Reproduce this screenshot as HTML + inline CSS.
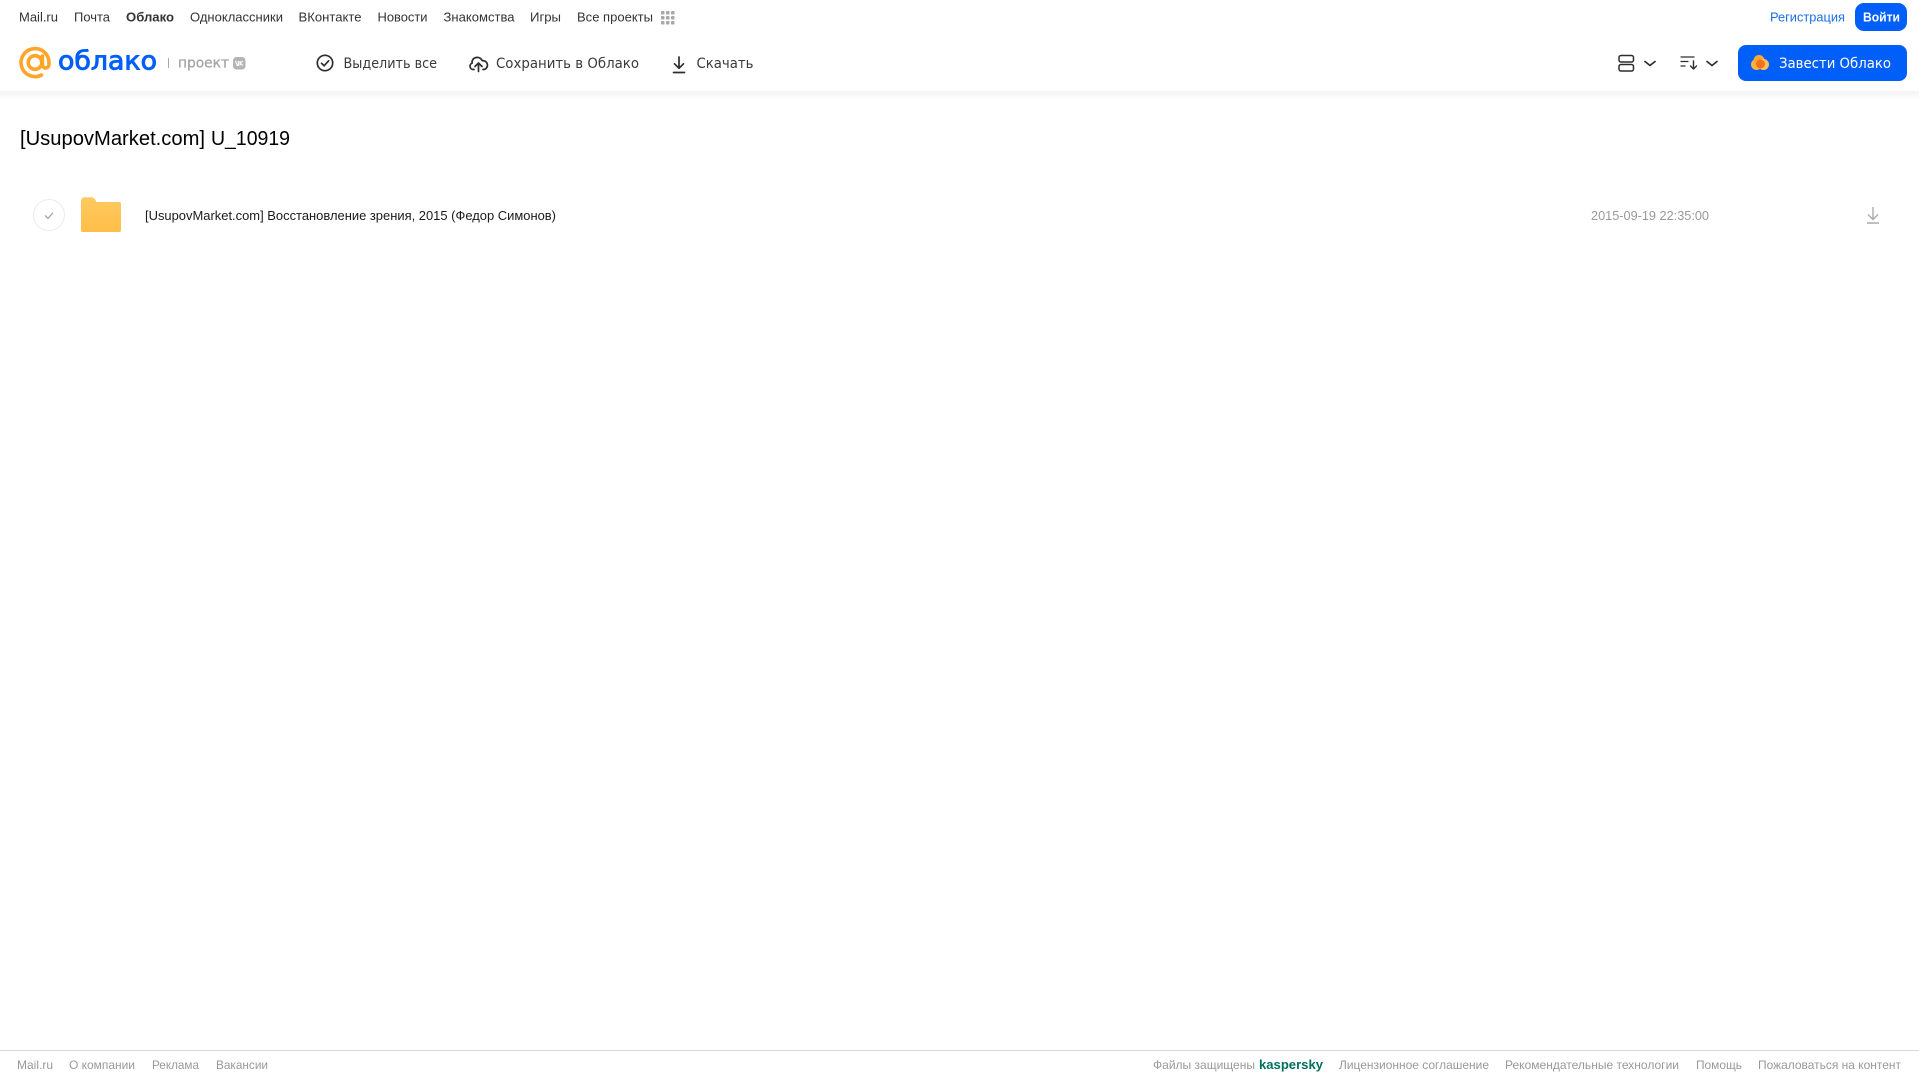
<!DOCTYPE html>
<html lang="ru">
<head>
<meta charset="utf-8">
<title>Облако</title>
<style>
html,body{margin:0;padding:0;width:1919px;height:1079px;overflow:hidden;background:#fff}
svg{display:block;position:absolute;left:0;top:0}
text{font-family:"Liberation Sans",sans-serif;white-space:pre}
.n{font-size:13px;fill:#333}
.t{font-family:"DejaVu Sans",sans-serif;font-size:14px;fill:#3a3a3a}
.f{font-size:12px;fill:#999}
</style>
</head>
<body>
<svg width="1919" height="1079" viewBox="0 0 1919 1079" xmlns="http://www.w3.org/2000/svg">
<defs>
<linearGradient id="sh" x1="0" y1="0" x2="0" y2="1"><stop offset="0" stop-color="#f2f2f2"/><stop offset="1" stop-color="#fff"/></linearGradient>
<linearGradient id="fo" x1="0" y1="0" x2="0" y2="1"><stop offset="0" stop-color="#ffca60"/><stop offset="1" stop-color="#ffbe48"/></linearGradient>
</defs>
<rect x="0" y="91" width="1919" height="9" fill="url(#sh)"/>

<!-- top nav -->
<text class="n" x="19" y="21.5" textLength="39" lengthAdjust="spacingAndGlyphs">Mail.ru</text>
<text class="n" x="74" y="21.5" textLength="36" lengthAdjust="spacingAndGlyphs">Почта</text>
<text class="n" x="126" y="21.5" textLength="48" lengthAdjust="spacingAndGlyphs" font-weight="700">Облако</text>
<text class="n" x="190" y="21.5" textLength="93" lengthAdjust="spacingAndGlyphs">Одноклассники</text>
<text class="n" x="298.500" y="21.5" textLength="63" lengthAdjust="spacingAndGlyphs">ВКонтакте</text>
<text class="n" x="377.500" y="21.5" textLength="50" lengthAdjust="spacingAndGlyphs">Новости</text>
<text class="n" x="443.500" y="21.5" textLength="71" lengthAdjust="spacingAndGlyphs">Знакомства</text>
<text class="n" x="530" y="21.5" textLength="31" lengthAdjust="spacingAndGlyphs">Игры</text>
<text class="n" x="577" y="21.5" textLength="76" lengthAdjust="spacingAndGlyphs">Все проекты</text>
<g fill="#a8a8a8">
<rect x="661" y="11" width="3.500" height="3.500" rx=".8"/><rect x="666" y="11" width="3.500" height="3.500" rx=".8"/><rect x="671" y="11" width="3.500" height="3.500" rx=".8"/>
<rect x="661" y="16" width="3.500" height="3.500" rx=".8"/><rect x="666" y="16" width="3.500" height="3.500" rx=".8"/><rect x="671" y="16" width="3.500" height="3.500" rx=".8"/>
<rect x="661" y="21" width="3.500" height="3.500" rx=".8"/><rect x="666" y="21" width="3.500" height="3.500" rx=".8"/><rect x="671" y="21" width="3.500" height="3.500" rx=".8"/>
</g>
<text class="n" x="1770" y="21.5" textLength="75" lengthAdjust="spacingAndGlyphs" style="fill:#1a6fe8">Регистрация</text>
<rect x="1855" y="3" width="52" height="28" rx="9" fill="#005ff9"/>
<text class="n" x="1863" y="21.5" textLength="37" lengthAdjust="spacingAndGlyphs" font-weight="700" style="fill:#fff">Войти</text>

<!-- logo -->
<g fill="none" stroke="#ffa52a" stroke-width="3.600" stroke-linecap="round">
<circle cx="35" cy="62.500" r="6.800"/>
<path d="M41.500 75A14 14 0 1 1 49 62.500v1.500c0 2.500-1.600 4-3.400 4s-3.200-1.500-3.200-4V56"/>
</g>
<text x="58" y="69.500" textLength="99" lengthAdjust="spacingAndGlyphs" font-size="26" style="font-family:'DejaVu Sans',sans-serif" fill="#005ff9" stroke="#005ff9" stroke-width=".9">облако</text>
<rect x="168" y="58" width="1" height="10" fill="#aaa"/>
<text x="178" y="67.500" textLength="51" lengthAdjust="spacingAndGlyphs" font-size="14" style="font-family:'DejaVu Sans',sans-serif" fill="#a5a5a5" stroke="#a5a5a5" stroke-width=".3">проект</text>
<rect x="233" y="57" width="12.500" height="12.500" rx="3.500" fill="#b4b4b4"/>
<path d="M235.500 61l1.800 4.500h1v-4.500M242.800 61l-2.600 2.200 2.800 2.300M240 61v4.500" fill="none" stroke="#fff" stroke-width="1.100"/>

<!-- toolbar -->
<g fill="none" stroke="#2c2d2e" stroke-width="1.700" stroke-linecap="round" stroke-linejoin="round">
<circle cx="325" cy="63" r="7.700"/>
<path d="M321.500 63.300l2.600 2.500 4.500-5"/>
<path d="M474 69.500h-.8a3.300 3.300 0 0 1-1-6.400 4.600 4.600 0 0 1 4-5.600c2.800-.5 5 .9 6 3.200a4.500 4.500 0 0 1 2.200 8.700l-1.400.1"/>
<path d="M478.500 71.500v-8M475 66.500l3.500-3.500 3.500 3.500"/>
<path d="M679 57v11M674.500 63.800l4.500 4.500 4.500-4.500M673.500 72.500h11"/>
</g>
<text class="t" x="343.500" y="68" textLength="93.500" lengthAdjust="spacingAndGlyphs">Выделить все</text>
<text class="t" x="496" y="68" textLength="143" lengthAdjust="spacingAndGlyphs">Сохранить в Облако</text>
<text class="t" x="696.500" y="68" textLength="57" lengthAdjust="spacingAndGlyphs">Скачать</text>

<!-- right tools -->
<g fill="none" stroke="#2c2d2e" stroke-width="1.500" stroke-linecap="round" stroke-linejoin="round">
<rect x="1619" y="55.500" width="14.500" height="6.500" rx="2"/>
<rect x="1619" y="64.500" width="14.500" height="6.500" rx="2"/>
<path d="M1645 61.500l5 4 5-4" stroke-width="1.700"/>
<path d="M1707 61.500l5 4 5-4" stroke-width="1.700"/>
<path d="M1681 57h13M1681 61.500h7M1681 66h4" stroke-width="1.200"/>
<path d="M1693.500 61v7.500M1690.500 66l3 3 3-3" stroke-width="1.400"/>
</g>
<rect x="1738" y="45" width="169" height="36" rx="8" fill="#005ff9"/>
<g>
<circle cx="1756.500" cy="64.500" r="5.500" fill="#ffb23c"/>
<circle cx="1759" cy="60.500" r="5.500" fill="#ffa930"/>
<circle cx="1763.500" cy="64.500" r="5.500" fill="#ffc05a"/>
<circle cx="1760.500" cy="64" r="4.500" fill="#f5701f"/>
</g>
<text class="t" x="1779" y="68" textLength="112" lengthAdjust="spacingAndGlyphs" style="fill:#fff">Завести Облако</text>

<!-- title -->
<text x="20" y="145" textLength="185" lengthAdjust="spacingAndGlyphs" font-size="20" fill="#000">[UsupovMarket.com]</text>
<text x="211" y="145" textLength="79" lengthAdjust="spacingAndGlyphs" font-size="20" fill="#000">U_10919</text>

<!-- row -->
<circle cx="49" cy="215" r="15.500" fill="#fff" stroke="#ececec" stroke-width="1"/>
<path d="M45 215.500l3 2.800 5-5.500" fill="none" stroke="#a5a5a5" stroke-width="1.300"/>
<path d="M81 201c0-2.200 1.400-3.800 3.500-3.800h7c2 0 3 1 3.800 2.500l1.200 2.300h22.500c1.200 0 2 .8 2 2v26c0 1.200-.8 2-2 2H83c-1.200 0-2-.8-2-2z" fill="url(#fo)"/>
<text x="145" y="220" textLength="411" lengthAdjust="spacingAndGlyphs" font-size="13" fill="#1a1a1a">[UsupovMarket.com] Восстановление зрения, 2015 (Федор Симонов)</text>
<text x="1591" y="220" textLength="118" lengthAdjust="spacingAndGlyphs" font-size="13" fill="#999">2015-09-19 22:35:00</text>
<path d="M1873 207v12M1868 214.500l5 5 5-5M1867 223h12" fill="none" stroke="#aaa" stroke-width="1.400"/>

<!-- footer -->
<rect x="0" y="1050" width="1919" height="1" fill="#d9d9d9"/>
<text class="f" x="17" y="1069" textLength="36" lengthAdjust="spacingAndGlyphs">Mail.ru</text>
<text class="f" x="69" y="1069" textLength="66" lengthAdjust="spacingAndGlyphs">О компании</text>
<text class="f" x="152" y="1069" textLength="47" lengthAdjust="spacingAndGlyphs">Реклама</text>
<text class="f" x="216" y="1069" textLength="52" lengthAdjust="spacingAndGlyphs">Вакансии</text>
<text class="f" x="1153" y="1069" textLength="102" lengthAdjust="spacingAndGlyphs">Файлы защищены</text>
<text x="1259" y="1069" textLength="64" lengthAdjust="spacingAndGlyphs" font-size="13" font-weight="700" fill="#00705c">kaspersky</text>
<text class="f" x="1339" y="1069" textLength="150" lengthAdjust="spacingAndGlyphs">Лицензионное соглашение</text>
<text class="f" x="1505" y="1069" textLength="174" lengthAdjust="spacingAndGlyphs">Рекомендательные технологии</text>
<text class="f" x="1696" y="1069" textLength="46" lengthAdjust="spacingAndGlyphs">Помощь</text>
<text class="f" x="1758" y="1069" textLength="143" lengthAdjust="spacingAndGlyphs">Пожаловаться на контент</text>
</svg>
</body>
</html>
